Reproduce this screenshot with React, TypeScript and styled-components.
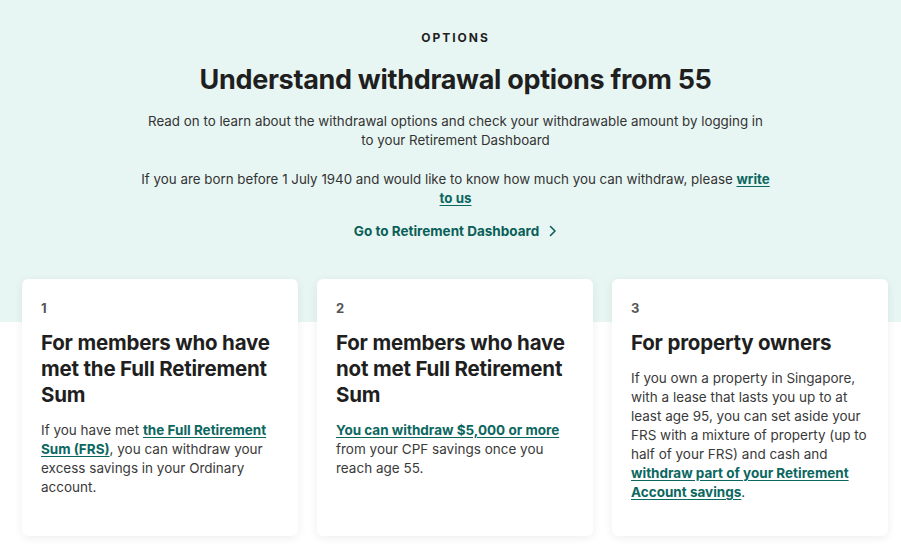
import React from "react";
import styled, { createGlobalStyle } from "styled-components";

const Global = createGlobalStyle`
  html, body { margin: 0; padding: 0; background: #ffffff; }
  body { font-family: Inter, "Noto Sans", sans-serif; color: #222222; }
  * { box-sizing: border-box; }
`;

const Page = styled.div`
  width: 901px;
  height: 555px;
  overflow: hidden;
  background: linear-gradient(to bottom, #e8f6f3 0, #e8f6f3 322px, #ffffff 322px);
`;

const Hero = styled.section`
  display: flex;
  flex-direction: column;
  align-items: center;
  padding: 30px 0 0 10px;
  text-align: center;
`;

const Eyebrow = styled.div`
  font-size: 12px;
  font-weight: 700;
  letter-spacing: 2px;
  color: #1f1f1f;
  line-height: 16px;
`;

const Title = styled.h1`
  margin: 18px 0 0;
  font-size: 27px;
  line-height: 32px;
  font-weight: 700;
  color: #1f1f1f;
  letter-spacing: -0.3px;
`;

const Lead = styled.p<{ $top: number; $width: number }>`
  margin: ${(p) => p.$top}px 0 0;
  width: ${(p) => p.$width}px;
  font-size: 13.35px;
  line-height: 19px;
  color: #333333;
`;

const InlineLink = styled.a`
  color: #0b6760;
  font-weight: 700;
  text-decoration: underline;
  text-underline-offset: 2px;
`;

const CtaLink = styled.a`
  margin-top: 13px;
  display: inline-flex;
  align-items: center;
  gap: 10px;
  font-size: 13.5px;
  font-weight: 700;
  color: #0b5f59;
  text-decoration: none;
  line-height: 20px;
`;

const Cards = styled.div`
  display: grid;
  grid-template-columns: repeat(3, 276px);
  column-gap: 19px;
  padding: 38px 12px 0 22px;
`;

const Card = styled.article`
  height: 257px;
  background: #ffffff;
  border-radius: 6px;
  box-shadow: 0 2px 10px rgba(0, 0, 0, 0.07);
  padding: 21px 19px 0 19px;
`;

const Num = styled.div`
  font-size: 13px;
  font-weight: 700;
  color: #555555;
  line-height: 16px;
`;

const CardTitle = styled.h2`
  margin: 14px 0 0;
  font-size: 20.5px;
  line-height: 26px;
  font-weight: 700;
  color: #1f1f1f;
  letter-spacing: -0.2px;
`;

const CardBody = styled.p`
  margin: 13px 0 0;
  font-size: 13.5px;
  line-height: 19px;
  color: #3a3a3a;
`;

const Chevron = () => (
  <svg width="8" height="12" viewBox="0 0 8 12" fill="none">
    <path d="M1.5 1.5 L6 6 L1.5 10.5" stroke="#0b5f59" strokeWidth="1.6" strokeLinecap="round" strokeLinejoin="round" />
  </svg>
);

export default function App() {
  return (
    <Page>
      <Global />
      <Hero>
        <Eyebrow>OPTIONS</Eyebrow>
        <Title>Understand withdrawal options from 55</Title>
        <Lead $top={16} $width={620}>
          Read on to learn about the withdrawal options and check your withdrawable amount by logging in to your Retirement Dashboard
        </Lead>
        <Lead $top={20} $width={632}>
          If you are born before 1 July 1940 and would like to know how much you can withdraw, please{" "}
          <InlineLink href="#">write to us</InlineLink>
        </Lead>
        <CtaLink href="#">
          Go to Retirement Dashboard <Chevron />
        </CtaLink>
      </Hero>
      <Cards>
        <Card>
          <Num>1</Num>
          <CardTitle>For members who have met the Full Retirement Sum</CardTitle>
          <CardBody>
            If you have met <InlineLink href="#">the Full Retirement Sum (FRS)</InlineLink>, you can withdraw your excess savings in your Ordinary account.
          </CardBody>
        </Card>
        <Card>
          <Num>2</Num>
          <CardTitle>For members who have not met Full Retirement Sum</CardTitle>
          <CardBody>
            <InlineLink href="#">You can withdraw $5,000 or more</InlineLink> from your CPF savings once you reach age 55.
          </CardBody>
        </Card>
        <Card>
          <Num>3</Num>
          <CardTitle>For property owners</CardTitle>
          <CardBody>
            If you own a property in Singapore, with a lease that lasts you up to at least age 95, you can set aside your FRS with a mixture of property (up to half of your FRS) and cash and{" "}
            <InlineLink href="#">withdraw part of your Retirement Account savings</InlineLink>.
          </CardBody>
        </Card>
      </Cards>
    </Page>
  );
}
